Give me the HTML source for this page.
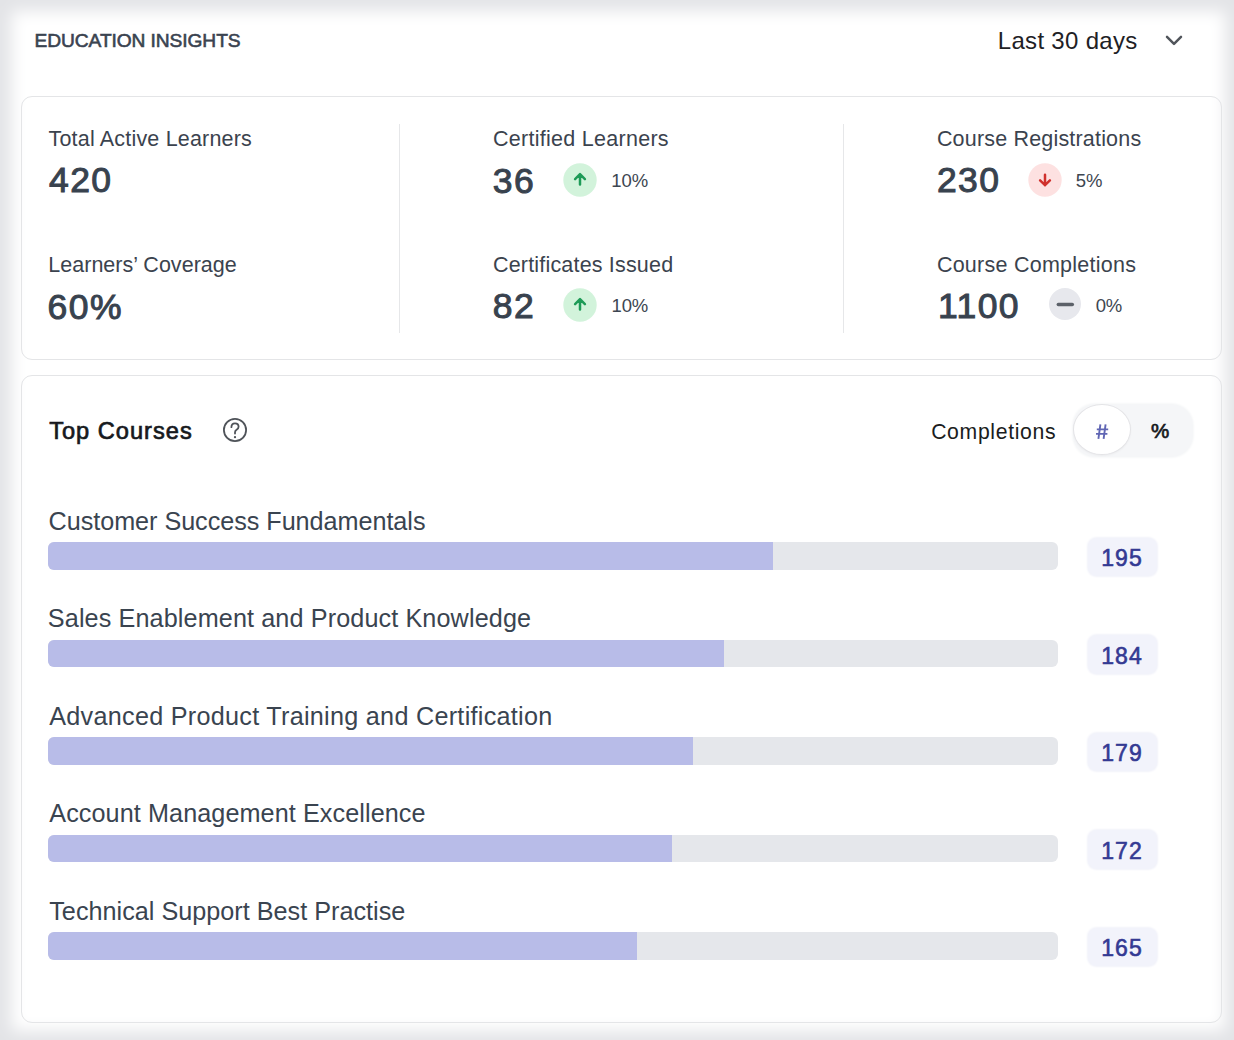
<!DOCTYPE html>
<html><head><meta charset="utf-8"><title>Education Insights</title>
<style>
html,body{margin:0;padding:0;}
body{width:1234px;height:1040px;position:relative;overflow:hidden;background:#fff;font-family:"Liberation Sans",sans-serif;}
.vig{position:absolute;left:0;top:0;width:1234px;height:1040px;box-shadow:inset 1.5px 1px 16px 10px #e3e4e7;pointer-events:none;}
.t{position:absolute;white-space:nowrap;line-height:1;}
.card{position:absolute;border:1px solid #e4e5e7;border-radius:11px;background:#fff;}
.vd{position:absolute;width:1.2px;background:#e6e7e9;}
.track{position:absolute;left:48.4px;width:1009.8px;height:27.6px;background:#e5e7eb;border-radius:6px;overflow:hidden;}
.fill{height:100%;background:#b8bce8;}
.nb{position:absolute;left:1087.7px;width:69.2px;height:38.6px;background:#f2f3fb;border-radius:9px;box-shadow:0 0 2px 0.5px #f2f3fa;}
.pill{position:absolute;left:1073px;top:403.8px;width:119.5px;height:53.2px;border-radius:22px;background:#f5f6f8;box-shadow:0 0 2px 0.5px #f7f8f9;}
.knob{position:absolute;left:1073.1px;top:404.1px;width:57.6px;height:50.8px;border-radius:50%;background:#fff;box-sizing:border-box;border:1.2px solid #e4e4e7;box-shadow:0 1px 2px rgba(0,0,0,0.04);}
</style></head><body>
<div class="t" style="left:34.62px;top:30.95px;font-size:19.2px;font-weight:400;color:#3a4350;letter-spacing:-0.092px;-webkit-text-stroke:0.6px #3a4350;">EDUCATION INSIGHTS</div>
<div class="t" style="left:997.82px;top:29.28px;font-size:24px;font-weight:400;color:#1e2125;letter-spacing:0.304px;">Last 30 days</div>
<svg style="position:absolute;left:1164px;top:33px" width="20" height="16" viewBox="0 0 20 16"><path d="M3 3.8 L10 10.8 L17 3.8" fill="none" stroke="#51555b" stroke-width="2.5" stroke-linecap="round" stroke-linejoin="round"/></svg>
<div class="card" style="left:21px;top:96.3px;width:1199px;height:262px"></div>
<div class="vd" style="left:398.5px;top:124px;height:209px"></div>
<div class="vd" style="left:842.5px;top:124px;height:209px"></div>
<div class="t" style="left:48.52px;top:129.20px;font-size:21.5px;font-weight:400;color:#3b434e;letter-spacing:0.187px;">Total Active Learners</div>
<div class="t" style="left:48.94px;top:162.55px;font-size:35.5px;font-weight:400;color:#38424e;letter-spacing:1.450px;-webkit-text-stroke:1.0px #38424e;">420</div>
<div class="t" style="left:48.24px;top:254.80px;font-size:21.5px;font-weight:400;color:#3b434e;letter-spacing:0.028px;">Learners’ Coverage</div>
<div class="t" style="left:47.54px;top:289.95px;font-size:35.5px;font-weight:400;color:#38424e;letter-spacing:1.450px;-webkit-text-stroke:1.0px #38424e;">60%</div>
<div class="t" style="left:493.02px;top:129.20px;font-size:21.5px;font-weight:400;color:#3b434e;letter-spacing:0.275px;">Certified Learners</div>
<div class="t" style="left:492.74px;top:163.55px;font-size:35.5px;font-weight:400;color:#38424e;letter-spacing:1.450px;-webkit-text-stroke:1.0px #38424e;">36</div>
<div class="t" style="left:493.02px;top:254.80px;font-size:21.5px;font-weight:400;color:#3b434e;letter-spacing:0.180px;">Certificates Issued</div>
<div class="t" style="left:492.74px;top:288.95px;font-size:35.5px;font-weight:400;color:#38424e;letter-spacing:1.450px;-webkit-text-stroke:1.0px #38424e;">82</div>
<div class="t" style="left:936.90px;top:129.20px;font-size:21.5px;font-weight:400;color:#3b434e;letter-spacing:0.184px;">Course Registrations</div>
<div class="t" style="left:936.90px;top:162.55px;font-size:35.5px;font-weight:400;color:#38424e;letter-spacing:1.450px;-webkit-text-stroke:1.0px #38424e;">230</div>
<div class="t" style="left:936.90px;top:254.80px;font-size:21.5px;font-weight:400;color:#3b434e;letter-spacing:0.250px;">Course Completions</div>
<div class="t" style="left:937.88px;top:288.95px;font-size:35.5px;font-weight:400;color:#38424e;letter-spacing:1.450px;-webkit-text-stroke:1.0px #38424e;">1100</div>
<svg style="position:absolute;left:562.60px;top:162.60px" width="34" height="34" viewBox="0 0 34 34"><circle cx="17" cy="17" r="16.7" fill="#d2f3db"/><path d="M17 21.6 V11.2 M12.1 16.1 L17 11.2 L21.9 16.1" fill="none" stroke="#1e9b57" stroke-width="2.5" stroke-linecap="round" stroke-linejoin="round"/></svg>
<div class="t" style="left:611.36px;top:171.94px;font-size:18.5px;font-weight:400;color:#3d4651;letter-spacing:-0.070px;">10%</div>
<svg style="position:absolute;left:562.60px;top:288.10px" width="34" height="34" viewBox="0 0 34 34"><circle cx="17" cy="17" r="16.7" fill="#d2f3db"/><path d="M17 21.6 V11.2 M12.1 16.1 L17 11.2 L21.9 16.1" fill="none" stroke="#1e9b57" stroke-width="2.5" stroke-linecap="round" stroke-linejoin="round"/></svg>
<div class="t" style="left:611.57px;top:297.34px;font-size:18.5px;font-weight:400;color:#3d4651;letter-spacing:-0.140px;">10%</div>
<svg style="position:absolute;left:1027.90px;top:162.60px" width="34" height="34" viewBox="0 0 34 34"><circle cx="17" cy="17" r="16.7" fill="#fde1e1"/><path d="M17 11.8 V22.2 M12.1 17.3 L17 22.2 L21.9 17.3" fill="none" stroke="#d0302c" stroke-width="2.5" stroke-linecap="round" stroke-linejoin="round"/></svg>
<div class="t" style="left:1075.80px;top:171.94px;font-size:18.5px;font-weight:400;color:#3d4651;letter-spacing:0.000px;">5%</div>
<svg style="position:absolute;left:1048.40px;top:287.40px" width="34" height="34" viewBox="0 0 34 34"><circle cx="17" cy="17" r="16" fill="#e7e8ed"/><path d="M10.3 17.4 H24.3" fill="none" stroke="#5c6169" stroke-width="3.5" stroke-linecap="round"/></svg>
<div class="t" style="left:1095.78px;top:297.34px;font-size:18.5px;font-weight:400;color:#3d4651;letter-spacing:-0.250px;">0%</div>
<div class="card" style="left:21px;top:375.2px;width:1199px;height:645.6px"></div>
<div class="t" style="left:49.18px;top:419.92px;font-size:23.6px;font-weight:400;color:#16191d;letter-spacing:1.006px;-webkit-text-stroke:0.7px #16191d;">Top Courses</div>
<svg style="position:absolute;left:220.8px;top:416.2px" width="28" height="28" viewBox="0 0 28 28"><circle cx="14" cy="14" r="11.1" fill="none" stroke="#4f5359" stroke-width="1.8"/><path d="M10.4 11.2 C10.4 8.9 12 7.4 14 7.4 C16 7.4 17.6 8.8 17.6 10.8 C17.6 12.6 16.4 13.4 15.3 14.1 C14.4 14.7 14 15.3 14 16.4 V17.6" fill="none" stroke="#4f5359" stroke-width="1.8" stroke-linecap="round"/><circle cx="14" cy="21.2" r="1.15" fill="#4f5359"/></svg>
<div class="t" style="left:931.16px;top:421.25px;font-size:21.2px;font-weight:400;color:#1a1c20;letter-spacing:0.662px;">Completions</div>
<div class="pill"></div>
<div class="knob"></div>
<svg style="position:absolute;left:1094px;top:422px" width="16" height="19" viewBox="0 0 16 19"><path d="M6.4 2.4 L4.4 16.8 M11.6 2.4 L9.6 16.8 M2.8 7.4 H14.2 M2.0 11.9 H13.4" fill="none" stroke="#6066b4" stroke-width="1.9"/></svg>
<div class="t" style="left:1160.20px;transform:translateX(-50%);top:421.45px;font-size:20.5px;font-weight:400;color:#16191d;letter-spacing:0.000px;-webkit-text-stroke:0.7px #16191d;">%</div>
<div class="t" style="left:48.55px;top:509.17px;font-size:25.2px;font-weight:400;color:#3a4450;letter-spacing:-0.037px;">Customer Success Fundamentals</div>
<div class="track" style="top:542.2px"><div class="fill" style="width:724.7px"></div></div>
<div class="nb" style="top:537.5px"></div>
<div class="t" style="left:1101.32px;top:546.63px;font-size:23px;font-weight:400;color:#343a93;letter-spacing:1.020px;-webkit-text-stroke:0.6px #343a93;">195</div>
<div class="t" style="left:47.85px;top:605.67px;font-size:25.2px;font-weight:400;color:#3a4450;letter-spacing:0.116px;">Sales Enablement and Product Knowledge</div>
<div class="track" style="top:639.7px"><div class="fill" style="width:675.7px"></div></div>
<div class="nb" style="top:635.0px"></div>
<div class="t" style="left:1101.32px;top:645.13px;font-size:23px;font-weight:400;color:#343a93;letter-spacing:1.020px;-webkit-text-stroke:0.6px #343a93;">184</div>
<div class="t" style="left:49.25px;top:704.17px;font-size:25.2px;font-weight:400;color:#3a4450;letter-spacing:0.275px;">Advanced Product Training and Certification</div>
<div class="track" style="top:737.2px"><div class="fill" style="width:644.4px"></div></div>
<div class="nb" style="top:732.5px"></div>
<div class="t" style="left:1101.32px;top:741.63px;font-size:23px;font-weight:400;color:#343a93;letter-spacing:1.020px;-webkit-text-stroke:0.6px #343a93;">179</div>
<div class="t" style="left:49.25px;top:800.67px;font-size:25.2px;font-weight:400;color:#3a4450;letter-spacing:0.088px;">Account Management Excellence</div>
<div class="track" style="top:834.7px"><div class="fill" style="width:623.6px"></div></div>
<div class="nb" style="top:830.0px"></div>
<div class="t" style="left:1101.32px;top:840.13px;font-size:23px;font-weight:400;color:#343a93;letter-spacing:1.020px;-webkit-text-stroke:0.6px #343a93;">172</div>
<div class="t" style="left:49.25px;top:899.17px;font-size:25.2px;font-weight:400;color:#3a4450;letter-spacing:0.015px;">Technical Support Best Practise</div>
<div class="track" style="top:932.2px"><div class="fill" style="width:588.5px"></div></div>
<div class="nb" style="top:927.5px"></div>
<div class="t" style="left:1101.32px;top:936.63px;font-size:23px;font-weight:400;color:#343a93;letter-spacing:1.020px;-webkit-text-stroke:0.6px #343a93;">165</div>
<div class="vig"></div>
</body></html>
